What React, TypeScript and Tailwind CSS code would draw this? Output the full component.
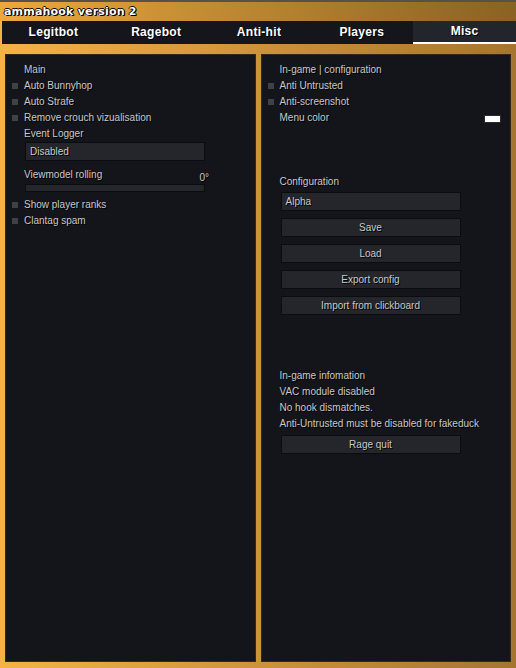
import type { ReactNode } from "react";

const tabs = ["Legitbot", "Ragebot", "Anti-hit", "Players", "Misc"];

const txt = "text-[10px] text-[#c9c9c9] [text-shadow:1px_1px_0_#000] leading-none whitespace-nowrap";

function Row({ label, check, children }: { label: string; check?: boolean; children?: ReactNode }) {
  return (
    <div className="relative flex h-4 items-center pl-[18px] pr-[9px]">
      {check && <span className="absolute left-[6px] top-[5px] h-[6px] w-[6px] bg-[#404146]" />}
      <span className={txt}>{label}</span>
      {children}
    </div>
  );
}

function Box({ label, center, className = "" }: { label: string; center?: boolean; className?: string }) {
  return (
    <div
      className={`ml-[19px] flex h-[19px] w-[180px] items-center border border-[#0b0c0e] bg-[#24262b] ${
        center ? "justify-center" : "pl-[4px]"
      } ${className}`}
    >
      <span className={txt}>{label}</span>
    </div>
  );
}

export default function App() {
  return (
    <div
      className="flex h-[668px] w-[516px] flex-col border-t-2 border-[#55524c] bg-gradient-to-r from-[#f4b443] to-[#a57530]"
      style={{ fontFamily: '"Liberation Sans", Arial, sans-serif' }}
    >
      {/* Title bar */}
      <div className="flex h-[19px] items-center bg-gradient-to-r from-[#eaa93d] to-[#8a6224] pl-[4px]">
        <span
          className="font-['DejaVu_Sans'] text-[11px] font-bold leading-none tracking-[0.2px] text-white [text-shadow:1px_1px_0_#000,-1px_0_0_#000,0_-1px_0_#000,1px_0_0_#000]"
        >
          ammahook version 2
        </span>
      </div>

      {/* Tabs */}
      <div className="ml-[2px] flex h-[23px] bg-[#15161b]">
        {tabs.map((t) => (
          <div
            key={t}
            className={`flex flex-1 items-center justify-center pb-[2px] ${
              t === "Misc" ? "border-b-2 border-white bg-[#22252c]" : ""
            }`}
          >
            <span className="text-[12px] font-bold leading-none tracking-[0.3px] text-white [text-shadow:1px_1px_0_#000]">
              {t}
            </span>
          </div>
        ))}
      </div>

      {/* Panels */}
      <div className="mt-[10px] flex flex-1 gap-[5px] px-[5px] pb-[6px]">
        <div className="flex-1 border border-[#33291a] bg-[#13151b] pt-[7px]">
          <Row label="Main" />
          <Row label="Auto Bunnyhop" check />
          <Row label="Auto Strafe" check />
          <Row label="Remove crouch vizualisation" check />
          <Row label="Event Logger" />
          <Box label="Disabled" />
          <div className="mt-[6px] flex h-4 w-[203px] items-center justify-between pl-[18px]">
            <span className={txt}>Viewmodel rolling</span>
            <span className={`${txt} mt-[6px]`}>0°</span>
          </div>
          <div className="ml-[19px] mt-[1px] h-[8px] w-[180px] border border-[#0b0c0e] bg-[#24262b]" />
          <div className="mt-[5px]">
            <Row label="Show player ranks" check />
            <Row label="Clantag spam" check />
          </div>
        </div>

        <div className="flex-1 border border-[#33291a] bg-[#13151b] pt-[7px]">
          <Row label="In-game | configuration" />
          <Row label="Anti Untrusted" check />
          <Row label="Anti-screenshot" check />
          <Row label="Menu color">
            <span className="ml-auto mt-[1px] h-[8px] w-[17px] border border-[#2a2a2a] bg-white" />
          </Row>
          <div className="mt-[48px]">
            <Row label="Configuration" />
          </div>
          <Box label="Alpha" className="mt-[2px]" />
          <Box label="Save" center className="mt-[7px]" />
          <Box label="Load" center className="mt-[7px]" />
          <Box label="Export config" center className="mt-[7px]" />
          <Box label="Import from clickboard" center className="mt-[7px]" />
          <div className="mt-[53px]">
            <Row label="In-game infomation" />
            <Row label="VAC module disabled" />
            <Row label="No hook dismatches." />
            <Row label="Anti-Untrusted must be disabled for fakeduck" />
          </div>
          <Box label="Rage quit" center className="mt-[3px]" />
        </div>
      </div>
    </div>
  );
}
